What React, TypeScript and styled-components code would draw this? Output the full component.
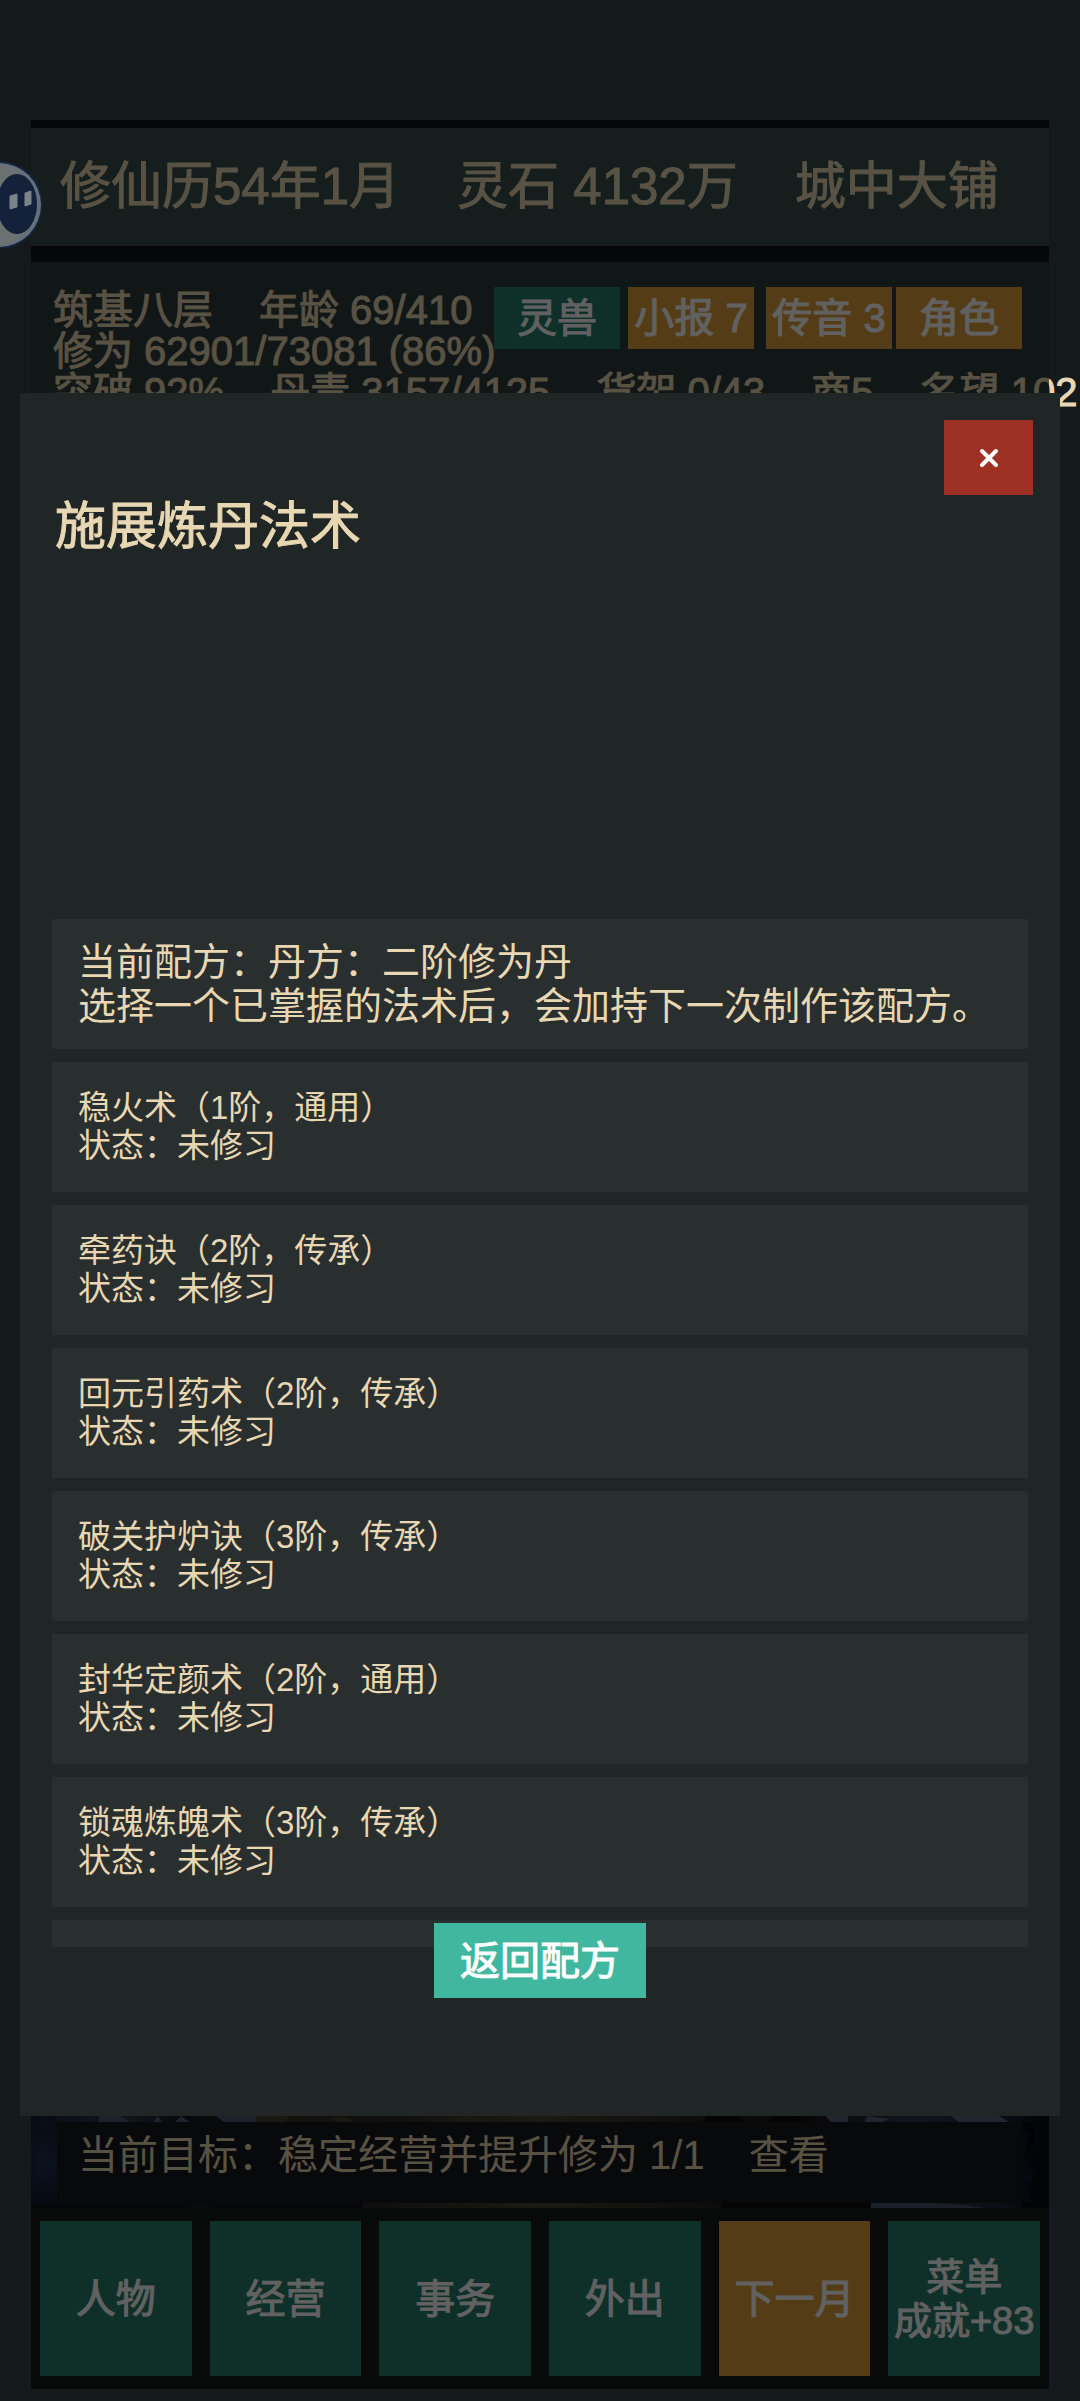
import React from "react";
import styled, { createGlobalStyle, css } from "styled-components";

const color = {
  page: "#14191c",
  sand: "#e8d7b3",
  teal: "#277e69",
  amber: "#dc9f3d",
  modal: "#1f2625",
  card: "#292e2e",
};

const GlobalStyle = createGlobalStyle`
  *, *::before, *::after { box-sizing: border-box; }
  html { background: ${color.page}; }
  body {
    margin: 0;
    overflow-x: hidden;
    font-family: "Liberation Sans", "Noto Sans CJK SC", sans-serif;
    color: ${color.sand};
  }
  h1, h2, p, ul { margin: 0; padding: 0; font-weight: 400; }
  ul { list-style: none; }
  button { border: 0; padding: 0; font-family: inherit; color: #fff; cursor: pointer; }
`;

const heavy = css`
  -webkit-text-stroke: 1px currentColor;
`;

const Page = styled.div`
  position: relative;
  display: flex;
  min-height: 100vh;
  padding: 120px 31px 12px;
`;

const Frame = styled.main`
  position: relative;
  flex: 1;
  min-width: 0;
  display: flex;
  flex-direction: column;
  padding-top: 8px;
  background: #0e1416;
`;

const Shade = styled.div`
  position: absolute;
  inset: 0;
  background: rgba(0, 0, 0, 0.62);
`;

const TopBar = styled.header`
  display: flex;
  align-items: center;
  gap: 57px;
  height: 118px;
  padding: 0 29px;
  background: #37504b;
  font-size: 51px;
  line-height: 58px;
  white-space: nowrap;
  ${heavy}
`;

const Status = styled.section`
  height: 220px;
  margin-top: 16px;
  padding: 25px 27px 0 22px;
  background: #2e3c3a;
  font-size: 40px;
  line-height: 41px;
  white-space: nowrap;
  ${heavy}
`;

const StatusHead = styled.div`
  display: flex;
  align-items: flex-start;
`;

const StatusText = styled.div`
  flex: 1;
  min-width: 0;
  padding-top: 3px;
`;

const StatusLine = styled.p`
  display: flex;
  gap: 46px;
`;

const ChipRow = styled.div<{ $gap: number }>`
  display: flex;
  gap: ${(p) => p.$gap}px;
`;

const Chip = styled.button<{ $tone: string }>`
  width: 126px;
  height: 62px;
  background: ${(p) => p.$tone};
  font-size: 40px;
  line-height: 44px;
  white-space: nowrap;
  ${heavy}
`;

const Scene = styled.section`
  position: relative;
  flex: 1;
  display: flex;
  flex-direction: column;
  justify-content: flex-end;
  padding: 0 28px 5px 26px;
  background: #06080c;
`;

const SceneArt = styled.svg`
  position: absolute;
  left: 0;
  bottom: 0;
  width: 100%;
  height: 120px;
`;

const Goal = styled.div`
  position: relative;
  display: flex;
  gap: 44px;
  height: 81px;
  padding: 10px 21px;
  background: #17191c;
  font-size: 40px;
  line-height: 46px;
  white-space: nowrap;
`;

const GoalLink = styled.a`
  color: inherit;
  text-decoration: none;
`;

const Nav = styled.nav`
  display: grid;
  grid-template-columns: repeat(6, 1fr);
  gap: 18px;
  padding: 13px 9px;
  background: #161a18;
`;

const NavButton = styled.button<{ $tone: string; $small?: boolean }>`
  height: 155px;
  background: ${(p) => p.$tone};
  font-size: ${(p) => (p.$small ? 38 : 40)}px;
  line-height: 44px;
  white-space: pre;
  ${heavy}
`;

const Avatar = styled.button`
  position: absolute;
  left: 0;
  top: 160px;
  width: 44px;
  height: 90px;
  background: none;
  svg { display: block; }
`;

const Modal = styled.section`
  position: absolute;
  left: 20px;
  right: 20px;
  top: 393px;
  display: flex;
  flex-direction: column;
  padding: 27px 32px 118px;
  background: ${color.modal};
`;

const ModalHead = styled.header`
  display: flex;
  flex-direction: column;
  min-height: 499px;
`;

const Close = styled.button`
  align-self: flex-end;
  display: grid;
  place-items: center;
  width: 89px;
  height: 75px;
  margin-right: -5px;
  background: #9e3024;
`;

const Title = styled.h2`
  padding: 3px;
  font-size: 51px;
  line-height: 58px;
  ${heavy}
`;

const List = styled.ul`
  display: flex;
  flex-direction: column;
  gap: 13px;
  height: 1028px;
  overflow-y: auto;
  scrollbar-width: none;
`;

const Card = styled.li<{ $lead?: boolean }>`
  flex: none;
  display: flex;
  flex-direction: column;
  justify-content: center;
  height: 130px;
  padding: 0 26px;
  background: ${color.card};
  font-size: ${(p) => (p.$lead ? 38 : 33)}px;
  line-height: ${(p) => (p.$lead ? 44 : 38)}px;
  white-space: nowrap;
`;

const ModalFoot = styled.footer`
  position: relative;
  display: flex;
  justify-content: center;
  margin-top: -24px;
`;

const Back = styled.button`
  width: 212px;
  height: 75px;
  background: #40b79e;
  font-size: 40px;
  line-height: 44px;
  ${heavy}
`;

const spells = [
  { name: "稳火术", rank: "1阶，通用" },
  { name: "牵药诀", rank: "2阶，传承" },
  { name: "回元引药术", rank: "2阶，传承" },
  { name: "破关护炉诀", rank: "3阶，传承" },
  { name: "封华定颜术", rank: "2阶，通用" },
  { name: "锁魂炼魄术", rank: "3阶，传承" },
];

const stats = ["突破 92%", "丹青 3157/4125", "货架 0/43", "商5", "名望 102"];

const navItems = [
  { label: "人物", tone: color.teal },
  { label: "经营", tone: color.teal },
  { label: "事务", tone: color.teal },
  { label: "外出", tone: color.teal },
  { label: "下一月", tone: color.amber },
  { label: "菜单\n成就+83", tone: color.teal, small: true },
];

function Landscape() {
  return (
    <SceneArt viewBox="0 0 1018 120" preserveAspectRatio="none" aria-hidden="true">
      <defs>
        <linearGradient id="ground" x1="0" x2="1" y1="0" y2="0">
          <stop offset="0" stopColor="#172238" />
          <stop offset="0.09" stopColor="#333844" />
          <stop offset="0.14" stopColor="#161c26" />
          <stop offset="0.21" stopColor="#1c1c22" />
          <stop offset="0.23" stopColor="#3a3024" />
          <stop offset="0.34" stopColor="#2c2822" />
          <stop offset="0.5" stopColor="#4c4334" />
          <stop offset="0.64" stopColor="#2c2720" />
          <stop offset="0.76" stopColor="#161411" />
          <stop offset="0.86" stopColor="#2d3646" />
          <stop offset="0.95" stopColor="#20283a" />
          <stop offset="1" stopColor="#04070e" />
        </linearGradient>
        <linearGradient id="dusk" x1="0" x2="0" y1="0" y2="1">
          <stop offset="0" stopColor="#10161f" />
          <stop offset="0.6" stopColor="#1c2a48" />
          <stop offset="1" stopColor="#121c30" />
        </linearGradient>
      </defs>
      <rect width="1018" height="120" fill="url(#ground)" />
      <rect width="26" height="120" fill="url(#dusk)" />
      <path d="M4 70l9-12 5 14 8-6v18l-12 8-8-7zM6 30l8-8 6 9-7 9z" fill="#24355a" opacity="0.4" />
      <path d="M68 28h22l8 6H68zM122 34l5-6 4 6zM150 28l8 6h-14zM185 28h40v6h-32z" fill="#4c5a78" />
      <path d="M225 28h34l-6 6h-28zM300 30l14-2 10 6h-20zM420 30l20-2 22 6h-36z" fill="#4a3d2a" />
      <path d="M795 28h22v6h-17zM836 28l22 3-8 3h-16zM920 28h48l10 6h-50z" fill="#56627e" />
      <path d="M677 26h30l6 8h-42zM742 27h22l10 7h-36z" fill="#0c0c0c" />
      <path d="M0 115h150l12 5H0zM182 115h150v5H176z" fill="#10141c" />
      <path d="M690 115h150v5H690z" fill="#0c0c0e" />
      <path d="M840 115h66l28 2 20 3H840z" fill="#44506a" />
      <path d="M990 34h28v86h-28z" fill="#070b14" />
      <path d="M990 40l8 6-5 22 10 16-6 18 4 12h-11zM1004 36l6 12-5 12z" fill="#182236" opacity="0.5" />
    </SceneArt>
  );
}

export default function App() {
  return (
    <>
      <GlobalStyle />
      <Page>
        <Frame>
          <TopBar>
            <span>修仙历54年1月</span>
            <span>灵石 4132万</span>
            <span>城中大铺</span>
          </TopBar>
          <Status>
            <StatusHead>
              <StatusText>
                <StatusLine>
                  <span>筑基八层</span>
                  <span>年龄 69/410</span>
                </StatusLine>
                <StatusLine>修为 62901/73081 (86%)</StatusLine>
              </StatusText>
              <ChipRow $gap={12}>
                <ChipRow $gap={8}>
                  <Chip type="button" $tone={color.teal}>灵兽</Chip>
                  <Chip type="button" $tone={color.amber}>小报 7</Chip>
                </ChipRow>
                <ChipRow $gap={4}>
                  <Chip type="button" $tone={color.amber}>传音 3</Chip>
                  <Chip type="button" $tone={color.amber}>角色</Chip>
                </ChipRow>
              </ChipRow>
            </StatusHead>
            <StatusLine>
              {stats.map((stat) => (
                <span key={stat}>{stat}</span>
              ))}
            </StatusLine>
          </Status>
          <Scene>
            <Landscape />
            <Goal>
              <span>当前目标：稳定经营并提升修为 1/1</span>
              <GoalLink href="#goal">查看</GoalLink>
            </Goal>
          </Scene>
          <Nav>
            {navItems.map((item) => (
              <NavButton key={item.label} type="button" $tone={item.tone} $small={item.small}>
                {item.label}
              </NavButton>
            ))}
          </Nav>
          <Shade />
        </Frame>

        <Avatar type="button" aria-label="助手">
          <svg width="44" height="90" viewBox="0 0 44 90" aria-hidden="true">
            <circle cx="-1" cy="45" r="44" fill="#14233a" />
            <circle cx="-1" cy="45" r="42" fill="#66707a" />
            <circle cx="-6" cy="45" r="41" fill="#6c7272" />
            <ellipse cx="17" cy="44" rx="20" ry="30" fill="#14213a" />
            <path d="M10 36l7-2v13l-7 2zM25 33l6-2v13l-6 2z" fill="#7b8488" stroke="#7b8488" strokeLinejoin="round" />
          </svg>
        </Avatar>

        <Modal role="dialog" aria-labelledby="spell-title">
          <ModalHead>
            <Close type="button" aria-label="关闭">
              <svg width="20" height="20" viewBox="0 0 20 20" aria-hidden="true">
                <path d="M3 3l14 14M17 3L3 17" stroke="#fff" strokeWidth="4" strokeLinecap="round" />
              </svg>
            </Close>
            <Title id="spell-title">施展炼丹法术</Title>
          </ModalHead>
          <List>
            <Card $lead>
              <p>当前配方：丹方：二阶修为丹</p>
              <p>选择一个已掌握的法术后，会加持下一次制作该配方。</p>
            </Card>
            {spells.map((spell) => (
              <Card key={spell.name}>
                <p>{spell.name}（{spell.rank}）</p>
                <p>状态：未修习</p>
              </Card>
            ))}
            <Card />
          </List>
          <ModalFoot>
            <Back type="button">返回配方</Back>
          </ModalFoot>
        </Modal>
      </Page>
    </>
  );
}
